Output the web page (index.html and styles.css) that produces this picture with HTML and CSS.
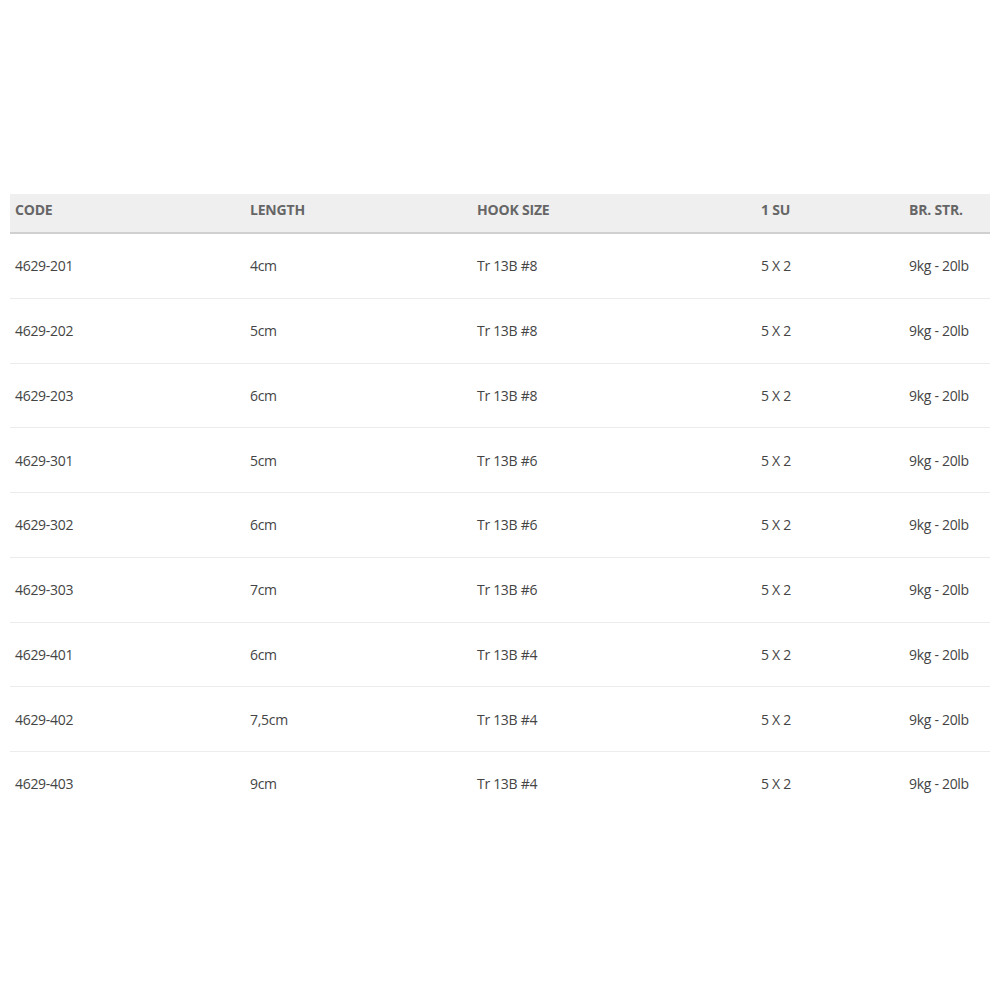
FILE: index.html
```html
<!DOCTYPE html>
<html>
<head>
<meta charset="utf-8">
<link rel="stylesheet" href="styles.css">
</head>
<body>
<table class="spec">
  <colgroup>
    <col class="c1"><col class="c2"><col class="c3"><col class="c4"><col class="c5">
  </colgroup>
  <thead>
    <tr><th>CODE</th><th>LENGTH</th><th>HOOK SIZE</th><th>1 SU</th><th>BR. STR.</th></tr>
  </thead>
  <tbody>
    <tr><td>4629-201</td><td>4cm</td><td>Tr 13B #8</td><td>5 X 2</td><td>9kg - 20lb</td></tr>
    <tr><td>4629-202</td><td>5cm</td><td>Tr 13B #8</td><td>5 X 2</td><td>9kg - 20lb</td></tr>
    <tr><td>4629-203</td><td>6cm</td><td>Tr 13B #8</td><td>5 X 2</td><td>9kg - 20lb</td></tr>
    <tr><td>4629-301</td><td>5cm</td><td>Tr 13B #6</td><td>5 X 2</td><td>9kg - 20lb</td></tr>
    <tr><td>4629-302</td><td>6cm</td><td>Tr 13B #6</td><td>5 X 2</td><td>9kg - 20lb</td></tr>
    <tr><td>4629-303</td><td>7cm</td><td>Tr 13B #6</td><td>5 X 2</td><td>9kg - 20lb</td></tr>
    <tr><td>4629-401</td><td>6cm</td><td>Tr 13B #4</td><td>5 X 2</td><td>9kg - 20lb</td></tr>
    <tr><td>4629-402</td><td>7,5cm</td><td>Tr 13B #4</td><td>5 X 2</td><td>9kg - 20lb</td></tr>
    <tr><td>4629-403</td><td>9cm</td><td>Tr 13B #4</td><td>5 X 2</td><td>9kg - 20lb</td></tr>
  </tbody>
</table>
</body>
</html>
```

FILE: styles.css
```css
html, body {
  margin: 0;
  padding: 0;
  background: #fff;
}
body {
  padding: 194px 10px 0 10px;
  font-family: "Open Sans", "Liberation Sans", sans-serif;
}
.spec {
  width: 980px;
  border-collapse: collapse;
  table-layout: fixed;
}
.c1 { width: 235px; }
.c2 { width: 227px; }
.c3 { width: 284px; }
.c4 { width: 148px; }
.c5 { width: 86px; }
.spec th {
  background: #efefef;
  color: #666;
  font-size: 14px;
  font-weight: 700;
  text-align: left;
  padding: 0 0 8px 5px;
  height: 30px;
  border-bottom: 2px solid #d0d0d0;
  letter-spacing: -0.2px;
  white-space: nowrap;
}
.spec td {
  color: #444;
  font-size: 14px;
  text-align: left;
  padding: 0 0 0 5px;
  height: 63.75px;
  border-bottom: 1px solid #ececec;
  letter-spacing: -0.3px;
  white-space: nowrap;
}
.spec tbody tr:last-child td {
  border-bottom: none;
}
```
